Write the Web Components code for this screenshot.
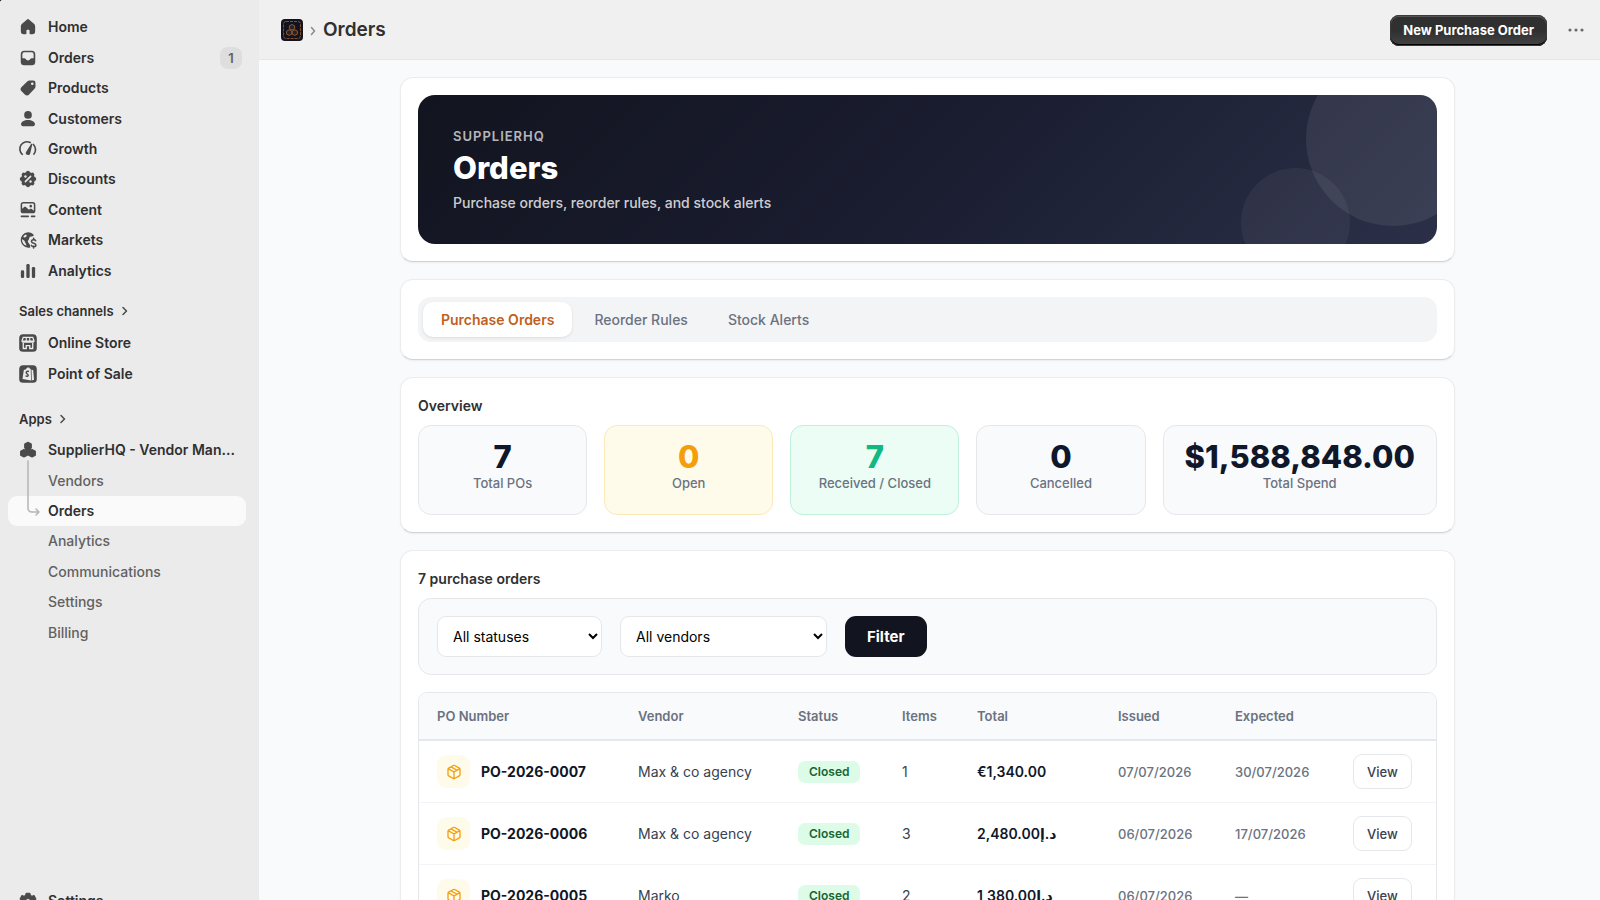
<!DOCTYPE html>
<html lang="en">
<head>
<meta charset="utf-8">
<meta name="viewport" content="width=device-width, initial-scale=1">
<title>Orders - SupplierHQ</title>
<style>
  html { background: #000; }
  body { margin: 0; font-family: Inter, "Noto Sans", "DejaVu Sans", sans-serif; font-size: 14px; color: #303030; }
</style>
</head>
<body>
<app-shell>
  <app-sidebar slot="sidebar"></app-sidebar>
  <app-header slot="header" heading="Orders"></app-header>
  <ui-card><hero-banner eyebrow="SUPPLIERHQ" heading="Orders">Purchase orders, reorder rules, and stock alerts</hero-banner></ui-card>
  <ui-card><tab-bar tabs="Purchase Orders|Reorder Rules|Stock Alerts"></tab-bar></ui-card>
  <ui-card heading="Overview">
    <stat-row>
      <stat-card value="7">Total POs</stat-card>
      <stat-card value="0" tone="warn">Open</stat-card>
      <stat-card value="7" tone="ok">Received / Closed</stat-card>
      <stat-card value="0">Cancelled</stat-card>
      <stat-card value="$1,588,848.00">Total Spend</stat-card>
    </stat-row>
  </ui-card>
  <ui-card heading="7 purchase orders">
    <filter-bar></filter-bar>
    <orders-table></orders-table>
  </ui-card>
</app-shell>
<script>
const define = (name, render, after) => customElements.define(name, class extends HTMLElement {
  constructor() { super(); this.attachShadow({ mode: 'open' }); }
  connectedCallback() {
    this.shadowRoot.innerHTML = render(this);
    if (after) after(this);
  }
});
const attr = (el, name) => el.getAttribute(name) || '';

/* 20-unit icon set, filled with the current colour */
const ICONS = {
  home: '<path d="M8.9 3.3a1.7 1.7 0 0 1 2.2 0l4.3 3.8c.7.6 1.1 1.5 1.1 2.4v4.3a2.6 2.6 0 0 1-2.6 2.7h-1.6a.9.9 0 0 1-.9-.9v-2.4a.7.7 0 0 0-.7-.7H9.300a.7.7 0 0 0-.7.7v2.400a.9.9 0 0 1-.9.9H6.100a2.600 2.600 0 0 1-2.600-2.700V9.500c0-.9.4-1.800 1.100-2.400z"/>',
  orders: '<path fill-rule="evenodd" d="M6.600 3.300h6.800a3.200 3.200 0 0 1 3.200 3.200v7a3.200 3.200 0 0 1-3.200 3.200H6.600a3.200 3.200 0 0 1-3.200-3.200v-7a3.200 3.200 0 0 1 3.200-3.200zm0 1.500a1.700 1.700 0 0 0-1.700 1.700v3.700h1.700c.6 0 1 .3 1.300.8.4.8 1.100 1.200 2.100 1.200s1.700-.4 2.100-1.200c.3-.5.7-.8 1.300-.8h1.700V6.500a1.700 1.700 0 0 0-1.700-1.700z"/>',
  products: '<path fill-rule="evenodd" d="M11.500 3.200h3.200a2.100 2.100 0 0 1 2.100 2.100v3.400c0 .8-.3 1.500-.9 2l-4.700 5a2.900 2.900 0 0 1-4.100.1l-2.900-2.900a2.700 2.700 0 0 1 0-3.900l5.100-4.900c.6-.6 1.400-.9 2.200-.9zm2.400 4.100a1.200 1.200 0 1 0 0-2.400 1.200 1.200 0 0 0 0 2.400z"/>',
  customers: '<circle cx="10" cy="6.300" r="3.500"/><path d="M3.700 14.800c0-2.400 2.800-3.900 6.300-3.900s6.300 1.500 6.300 3.900c0 1.100-.8 1.700-1.700 1.700H5.400c-.9 0-1.700-.6-1.700-1.700z"/>',
  growth: '<path fill="none" stroke="currentColor" stroke-width="1.500" stroke-linecap="round" d="M4.800 14.800A6.500 6.500 0 0 1 12 4.100M14.900 5.900a6.500 6.500 0 0 1 .5 8.700"/><path d="M13.500 5.200c.5.100.5.400.4.800l-1.900 8a2 2 0 1 1-3.500-1.800l4.300-6.700c.2-.3.400-.4.700-.3z"/>',
  discounts: '<circle cx="10" cy="10" r="6.300"/><g stroke="currentColor" stroke-width="3.600" stroke-linecap="round"><path d="M10 4.300v11.400M4.300 10h11.400M6 6l8 8M14 6l-8 8"/></g><path d="M7.600 12.400l4.800-4.800" stroke="#ebebeb" stroke-width="1.400" stroke-linecap="round"/><circle cx="7.700" cy="7.800" r="1.100" fill="#ebebeb"/><circle cx="12.300" cy="12.300" r="1.100" fill="#ebebeb"/>',
  content: '<path fill-rule="evenodd" d="M5.700 2.700h8.600a2.400 2.400 0 0 1 2.400 2.400v5.500a2.400 2.400 0 0 1-2.400 2.400H5.700a2.400 2.400 0 0 1-2.400-2.400V5.100a2.400 2.400 0 0 1 2.400-2.400zm0 1.400c-.6 0-1 .4-1 1v3.800l1.600-1.400c.6-.5 1.400-.5 2 0l2.600 2.300.8-.6c.5-.4 1.200-.4 1.700 0l1.900 1.400V5.100c0-.6-.4-1-1-1zm6.800 3.600a1.200 1.200 0 1 0 0-2.400 1.200 1.200 0 0 0 0 2.400z"/><rect x="3.300" y="15.100" width="7.600" height="1.500" rx=".7"/><rect x="12.500" y="15.100" width="4.200" height="1.500" rx=".7"/>',
  markets: '<path fill-rule="evenodd" d="M10 3c2.300 0 4.200 1 5.500 2.700l-1.400.9c-.9.300-2 .1-2.600.9-.8 1-.2 1.800-1.200 2.700-.7.600-.4 1.700.1 2.400l1.300 1.700c.4.800.3 1.600.3 2.500A7 7 0 1 1 10 3zM4.600 9.200c.7 1.200 2.300.9 2.500 2.200.1.900.7 1.400 1.100 2.200.2.500.1 1.200.4 1.700A5.500 5.500 0 0 1 4.600 9.200zM8 4.900c1.300.5.900 1.500.2 2.200-.8.800-2 .8-2.500-.1A5.600 5.600 0 0 1 8 4.900z"/><path d="M17 10.700c-.4-.8-1.200-1.100-2.100-1-1.100.1-1.800.8-1.700 1.700.2 1.900 3.900 1.200 4 3.100 0 1-.9 1.600-2 1.600-.9 0-1.700-.4-2.100-1.200M15.100 8.500v1.300m0 6v1.500" fill="none" stroke="currentColor" stroke-width="1.400" stroke-linecap="round"/>',
  analytics: '<rect x="3.500" y="9.400" width="3" height="7" rx="1.200"/><rect x="8.500" y="3.600" width="3" height="12.800" rx="1.200"/><rect x="13.500" y="6.400" width="3" height="10" rx="1.200"/>',
  store: '<rect x="2" y="2" width="16" height="16" rx="3.500"/><path d="M5.700 4.900h8.600l1 2.700v.8H4.700v-.8zM4.700 9.200h10.600M5.700 10v5h2.700v-2.600h3.200V15h2.700v-5" fill="none" stroke="#ebebeb" stroke-width="1.200"/><path d="M8.400 5.500v3.200M11.600 5.500v3.200" stroke="#ebebeb"/>',
  pos: '<rect x="2" y="2" width="16" height="16" rx="3.500"/><path fill="#ebebeb" d="M6.200 6.300l2-.7C8.600 4.400 9.400 4 10.200 4c.8 0 1.300.5 1.500 1.200l.8.200.3 10.500-7.800-1.400zM13.200 5.800l1.500.7.800 8.700-2.100.7z"/><path d="M10.900 7.700c-1.600-.6-2.600.1-2.500 1.100.1 1.200 1.900 1.200 1.800 2.400-.1 1-1.300 1.200-2.500.4" fill="none" stroke="#4a4a4a" stroke-width="1.300"/>',
  boxes: '<path stroke="currentColor" stroke-linejoin="round" d="m10 3 3 1.500v3.600L10 9.700 7 8.100V4.500zM6.300 9.600l3.200 1.600v3.500l-3.200 1.600-3-1.600v-3.500zM13.700 9.600l3 1.600v3.500l-3 1.600-3.200-1.600v-3.500zM8 8h4v4H8z"/>',
  gear: '<path fill-rule="evenodd" stroke="currentColor" stroke-linejoin="round" d="M8.300 3h3.400l.5 2 1.300.7 2-.6 1.700 3-1.500 1.400v1.300l1.500 1.300-1.700 3-2-.6-1.300.8-.5 1.900H8.300l-.5-1.900-1.300-.8-2 .6-1.700-3 1.500-1.300V9.500L2.800 8.100l1.700-3 2 .6L7.800 5zM10 12.300a2.300 2.300 0 1 0 0-4.600 2.300 2.300 0 0 0 0 4.600z"/>'
};
define('app-icon', el => `
  <style>
    :host { display: block; width: 22px; height: 22px; flex: none; }
    svg { display: block; width: 100%; height: 100%; fill: currentColor; }
  </style>
  <svg viewBox="0 0 20 20" aria-hidden="true">${ICONS[attr(el, 'name')]}</svg>`);

define('app-shell', () => `
  <style>
    :host { display: grid; grid-template-columns: 259px minmax(0, 1fr); height: 100vh; overflow: hidden;
      border-top-left-radius: 3px; background: #f9fafc; }
    .main { display: flex; flex-direction: column; min-height: 0; height: 100vh; }
    main { flex: 1; min-height: 0; overflow-y: auto; scrollbar-width: none; padding: 17px 21px 17px 17px; }
    .column { display: flex; flex-direction: column; gap: 17px; max-width: 1055px; margin: 0 auto; }
  </style>
  <slot name="sidebar"></slot>
  <div class="main">
    <slot name="header"></slot>
    <main><div class="column"><slot></slot></div></main>
  </div>`);

define('nav-item', el => `
  <style>
    :host { display: flex; flex: 1; position: relative; }
    a { display: flex; flex: 1; align-items: center; gap: 9px; min-width: 0; padding: 0 4px 0 9px; border-radius: 9px;
      color: #303030; font-size: 14px; font-weight: 600; line-height: 22px; text-decoration: none; }
    app-icon { color: #4a4a4a; }
    .label { flex: 1; min-width: 0; overflow: hidden; white-space: nowrap; text-overflow: ellipsis; }
    .badge { min-width: 22px; box-sizing: border-box; border-radius: 8px; background: #dedede; color: #616161;
      font-size: 13px; text-align: center; }
    :host([sub]) a { padding-left: 40px; color: #616161; font-weight: 500; }
    :host([current]) a { background: #fafafa; color: #303030; font-weight: 600; }
    .branch { position: absolute; left: 19px; bottom: 9px; width: 14px; height: 58px; fill: none; stroke: #b5b5b5; stroke-width: 1.5;
      stroke-linecap: round; stroke-linejoin: round; }
  </style>
  <a href="#"${el.hasAttribute('current') ? ' aria-current="page"' : ''}>
    ${el.hasAttribute('icon') ? `<app-icon name="${attr(el, 'icon')}"></app-icon>` : ''}
    <span class="label"><slot></slot></span>
    ${el.hasAttribute('badge') ? `<span class="badge">${attr(el, 'badge')}</span>` : ''}
  </a>
  ${el.hasAttribute('current') ? '<svg class="branch" viewBox="0 0 14 58" aria-hidden="true"><path d="M1 2v47q0 4 4 4h7M9 50l3 3-3 3"/></svg>' : ''}`);

define('app-sidebar', () => `
  <style>
    :host { display: block; background: #ebebeb; }
    nav { display: flex; flex-direction: column; box-sizing: border-box; min-height: calc(100vh + 16px); padding: 12px 13px 0 8px; }
    .group { display: flex; flex-direction: column; }
    .primary { min-height: 274px; }
    .channels { min-height: 61px; }
    .apps { min-height: 213px; }
    .foot { min-height: 31px; margin-top: auto; }
    .heading { display: flex; align-items: center; gap: 7px; padding: 0 11px; color: #303030; font-size: 13px; font-weight: 600;
      line-height: 22px; text-decoration: none; }
    .heading.first { margin: 14px 0 6px; }
    .heading.second { margin: 19px 0 5px; }
    svg { width: 8px; height: 10px; fill: none; stroke: #4a4a4a; stroke-width: 1.5; stroke-linecap: round; stroke-linejoin: round; }
  </style>
  <nav aria-label="Main">
    <div class="group primary">
      <nav-item icon="home">Home</nav-item>
      <nav-item icon="orders" badge="1">Orders</nav-item>
      <nav-item icon="products">Products</nav-item>
      <nav-item icon="customers">Customers</nav-item>
      <nav-item icon="growth">Growth</nav-item>
      <nav-item icon="discounts">Discounts</nav-item>
      <nav-item icon="content">Content</nav-item>
      <nav-item icon="markets">Markets</nav-item>
      <nav-item icon="analytics">Analytics</nav-item>
    </div>
    <a class="heading first" href="#">Sales channels <svg viewBox="0 0 8 10" aria-hidden="true"><path d="m2 1.500 3.500 3.500L2 8.500"/></svg></a>
    <div class="group channels">
      <nav-item icon="store">Online Store</nav-item>
      <nav-item icon="pos">Point of Sale</nav-item>
    </div>
    <a class="heading second" href="#">Apps <svg viewBox="0 0 8 10" aria-hidden="true"><path d="m2 1.500 3.500 3.500L2 8.500"/></svg></a>
    <div class="group apps">
      <nav-item icon="boxes">SupplierHQ - Vendor Man...</nav-item>
      <nav-item sub>Vendors</nav-item>
      <nav-item sub current>Orders</nav-item>
      <nav-item sub>Analytics</nav-item>
      <nav-item sub>Communications</nav-item>
      <nav-item sub>Settings</nav-item>
      <nav-item sub>Billing</nav-item>
    </div>
    <div class="group foot"><nav-item icon="gear">Settings</nav-item></div>
  </nav>`);

define('app-header', el => `
  <style>
    :host { display: block; flex: none; background: #f0f0f0; border-bottom: 1px solid #e6e7e8; }
    header { display: flex; align-items: center; height: 59px; padding: 0 9px 0 22px; }
    .app { width: 22px; height: 22px; }
    .sep { width: 8px; height: 10px; margin: 2px 6px 0 6px; fill: none; stroke: #8a8a8a; stroke-width: 1.5; stroke-linecap: round; stroke-linejoin: round; }
    h1 { flex: 1; margin: 0; font-size: 19px; font-weight: 600; line-height: 27px; color: #303030; }
    button { border: 0; font: inherit; cursor: pointer; }
    .primary { height: 31px; margin-top: 1px; padding: 0 13px; border-radius: 9px; color: #fff; font-size: 13px; font-weight: 700;
      background: linear-gradient(#303030 50%, #444); box-shadow: inset 0 0 0 1px #3a3a3a, inset 0 -2px 0 #000, inset 0 1px 0 1px #555; }
    .more { display: grid; place-items: center; width: 30px; height: 30px; margin-left: 14px; padding: 0; background: none; }
    .more svg { width: 16px; height: 4px; fill: #6b6b6b; }
  </style>
  <header>
    <svg class="app" viewBox="0 0 22 22" aria-hidden="true"><rect width="22" height="22" rx="4" fill="#12131f"/>
      <rect x="2.500" y="2.500" width="17" height="17" rx="2.500" fill="none" stroke="#80522f" stroke-dasharray="3 1"/>
      <path d="m11 5.500 2.600 1.300v3L11 11.100 8.400 9.800v-3zM8.200 10.800l2.600 1.300v3l-2.600 1.300-2.600-1.300v-3zM13.800 10.800l2.600 1.300v3l-2.600 1.300-2.600-1.300v-3z" fill="#2c2023" stroke="#8c5a35"/></svg>
    <svg class="sep" viewBox="0 0 8 10" aria-hidden="true"><path d="m2.500 1.500 3 3.500-3 3.500"/></svg>
    <h1>${attr(el, 'heading')}</h1>
    <button class="primary" type="button">New Purchase Order</button>
    <button class="more" type="button" aria-label="More actions"><svg viewBox="0 0 16 4"><circle cx="2" cy="2" r="1.600"/><circle cx="8" cy="2" r="1.600"/><circle cx="14" cy="2" r="1.600"/></svg></button>
  </header>`);

define('ui-card', el => `
  <style>
    :host { display: flex; flex-direction: column; gap: 17px; padding: 17px; border: 1px solid #ebecee; border-bottom-color: #d2d3d5;
      border-radius: 13px; background: #fff; box-shadow: 0 1px 2px rgba(0, 0, 0, .06); }
    h2 { margin: 0 0 -9px; font-size: 14px; font-weight: 600; line-height: 22px; color: #303030; }
  </style>
  ${el.hasAttribute('heading') ? `<h2>${attr(el, 'heading')}</h2>` : ''}<slot></slot>`);

define('hero-banner', el => `
  <style>
    :host { display: block; position: relative; overflow: hidden; padding: 31px 35px 29px; border-radius: 17px; color: #fff;
      background: linear-gradient(135deg, #12141f 0%, #1a1d30 50%, #2b3048 100%); }
    .disc { position: absolute; border-radius: 50%; }
    .big { width: 174px; height: 174px; right: -43px; top: -43px; background: rgba(255, 255, 255, .08); }
    .small { width: 109px; height: 109px; right: 87px; bottom: -33px; background: rgba(255, 255, 255, .05); }
    .eyebrow { font-size: 13px; font-weight: 600; line-height: 20px; letter-spacing: 1px; color: rgba(255, 255, 255, .7); }
    h2 { margin: 3px 0 5px; font-size: 31px; font-weight: 800; line-height: 37px; }
    p { margin: 0; font-size: 14px; font-weight: 500; line-height: 24px; color: rgba(255, 255, 255, .8); }
  </style>
  <div class="disc big"></div><div class="disc small"></div>
  <div class="eyebrow">${attr(el, 'eyebrow')}</div>
  <h2>${attr(el, 'heading')}</h2>
  <p><slot></slot></p>`);

define('tab-bar', el => `
  <style>
    :host { display: flex; gap: 4px; padding: 5px; border-radius: 13px; background: #f3f4f6; }
    button { height: 35px; padding: 0 18px; border: 0; border-radius: 10px; background: none; color: #6b7280; font: inherit;
      font-size: 14px; font-weight: 500; cursor: pointer; }
    button[aria-selected=true] { background: #fff; color: #c05f21; font-weight: 600; box-shadow: 0 1px 3px rgba(0, 0, 0, .1); }
  </style>
  ${attr(el, 'tabs').split('|').map((t, i) => `<button type="button" role="tab" aria-selected="${i === 0}">${t}</button>`).join('')}`,
  el => el.setAttribute('role', 'tablist'));

define('stat-row', () => `<style>:host { display: flex; gap: 17px; }</style><slot></slot>`);
define('stat-card', el => `
  <style>
    :host { flex: 1 1 0; box-sizing: border-box; padding: 15px 21px 21px; border: 1px solid #e5e7eb; border-radius: 13px;
      background: #f9fafc; text-align: center; --value: #0f172a; }
    :host([tone=warn]) { background: #fffbeb; border-color: #fde8b8; --value: #f59e0b; }
    :host([tone=ok]) { background: #ecfdf5; border-color: #bff0da; --value: #10b981; }
    .value { font-size: 31px; font-weight: 800; line-height: 32px; color: var(--value); }
    .label { font-size: 13px; font-weight: 500; line-height: 20px; color: #6b7280; white-space: nowrap; }
  </style>
  <div class="value">${attr(el, 'value')}</div>
  <div class="label"><slot></slot></div>`);

define('filter-bar', () => `
  <style>
    :host { display: block; }
    form { display: flex; gap: 18px; padding: 17px 18px; border: 1px solid #e5e7eb; border-radius: 13px; background: #f9fafc; }
    select { box-sizing: border-box; height: 41px; padding: 0 0 0 11px; border: 1px solid #e5e7eb; border-radius: 9px; background: #fff;
      color: #000; font: inherit; font-size: 14px; }
    .status { width: 165px; }
    .vendor { width: 207px; }
    button { height: 41px; padding: 0 22px; border: 0; border-radius: 11px; background: #12141f; color: #fff; font: inherit;
      font-size: 15px; font-weight: 700; cursor: pointer; }
  </style>
  <form onsubmit="return false">
    <select class="status" aria-label="Status"><option>All statuses</option></select>
    <select class="vendor" aria-label="Vendor"><option>All vendors</option></select>
    <button type="submit">Filter</button>
  </form>`);

const ORDERS = [
  ['PO-2026-0007', 'Max &amp; co agency', 1, '€1,340.00', '07/07/2026', '30/07/2026'],
  ['PO-2026-0006', 'Max &amp; co agency', 3, '2,480.00د.إ', '06/07/2026', '17/07/2026'],
  ['PO-2026-0005', 'Marko', 2, '1,380.00د.إ', '06/07/2026', '—']
];
define('orders-table', () => `
  <style>
    :host { display: block; overflow: hidden; border: 1px solid #e5e7eb; border-radius: 9px; }
    table { width: 100%; border-collapse: separate; border-spacing: 0; table-layout: fixed; }
    th, td { box-sizing: border-box; padding: 0 0 0 18px; text-align: left; white-space: nowrap; }
    th { height: 48px; border-bottom: 2px solid #e5e7eb; background: #f9fafc; color: #6b7280; font-size: 13px; font-weight: 600; }
    td { height: 62px; border-bottom: 1px solid #f3f4f6; color: #374151; font-size: 14px; }
    .po { display: flex; align-items: center; gap: 11px; color: #0f172a; font-weight: 700; }
    .tile { display: grid; place-items: center; width: 33px; height: 33px; border-radius: 9px; background: #fffbeb; }
    .tile svg { width: 16px; height: 16px; fill: none; stroke: #f59e0b; stroke-width: 2; stroke-linecap: round; stroke-linejoin: round; }
    .badge { display: inline-block; padding: 0 11px; border-radius: 7px; background: #dcfce7; color: #166534; font-size: 12px; font-weight: 600; line-height: 22px; }
    .total { color: #0f172a; font-weight: 600; }
    .date { color: #6b7280; font-size: 13px; font-weight: 500; }
    button { height: 35px; padding: 0 13px; border: 1px solid #e5e7eb; border-radius: 9px; background: #fff; color: #374151; font: inherit;
      font-size: 13px; font-weight: 500; cursor: pointer; }
  </style>
  <table>
    <colgroup><col style="width:201px"><col style="width:160px"><col style="width:104px"><col style="width:75px"><col style="width:141px"><col style="width:117px"><col style="width:118px"><col style="width:103px"></colgroup>
    <thead><tr><th>PO Number</th><th>Vendor</th><th>Status</th><th>Items</th><th>Total</th><th>Issued</th><th>Expected</th><th aria-label="Actions"></th></tr></thead>
    <tbody>${ORDERS.map(([po, vendor, items, total, issued, due]) => `<tr>
      <td><div class="po"><span class="tile"><svg viewBox="0 0 24 24" aria-hidden="true"><path d="m7.500 4.300 9 5.100M21 8a2 2 0 0 0-1-1.700l-7-4a2 2 0 0 0-2 0l-7 4A2 2 0 0 0 3 8v8a2 2 0 0 0 1 1.700l7 4a2 2 0 0 0 2 0l7-4a2 2 0 0 0 1-1.700zM3.300 7l8.700 5 8.700-5M12 22V12"/></svg></span>${po}</div></td>
      <td>${vendor}</td><td><span class="badge">Closed</span></td><td>${items}</td><td class="total">${total}</td>
      <td class="date">${issued}</td><td class="date">${due}</td><td><button type="button">View</button></td></tr>`).join('')}</tbody>
  </table>`);
</script>
</body>
</html>
